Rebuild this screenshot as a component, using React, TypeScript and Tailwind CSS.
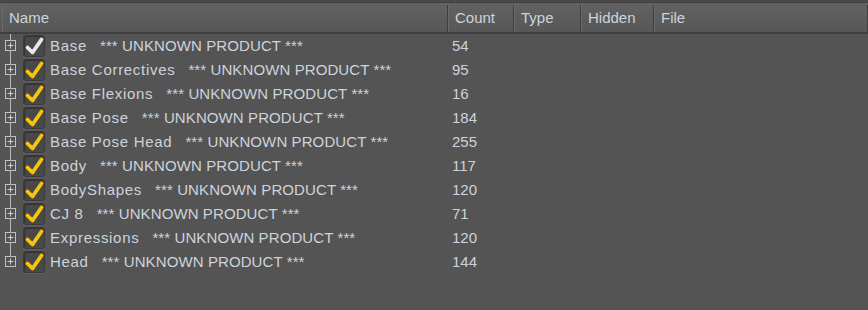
import React from 'react';

const ROWS = [
  { name: 'Base', count: '54', white: true },
  { name: 'Base Correctives', count: '95' },
  { name: 'Base Flexions', count: '16' },
  { name: 'Base Pose', count: '184' },
  { name: 'Base Pose Head', count: '255' },
  { name: 'Body', count: '117' },
  { name: 'BodyShapes', count: '120' },
  { name: 'CJ 8', count: '71' },
  { name: 'Expressions', count: '120' },
  { name: 'Head', count: '144' },
];

const COLS = [
  { label: 'Name', w: 'w-[446px]' },
  { label: 'Count', w: 'w-[66px]' },
  { label: 'Type', w: 'w-[67px]' },
  { label: 'Hidden', w: 'w-[73px]' },
  { label: 'File', w: 'flex-1' },
];

function Check({ white }: { white?: boolean }) {
  return (
    <div className="relative w-[22px] h-[22px] rounded-[3px] bg-[#484848] border border-[#3a3a3a] shadow-[inset_1px_1px_0_#333,0_1px_0_#606060]">
      <svg className="absolute left-[-1px] top-[-1px]" width="22" height="22" viewBox="0 0 22 22">
        <path
          d="M4.5 12.5 L9.5 17.5 L18.5 4.5"
          fill="none"
          stroke={white ? '#e9e9e9' : '#f7c414'}
          strokeWidth="3.8"
          strokeLinecap="round"
          strokeLinejoin="round"
        />
      </svg>
    </div>
  );
}

export default function App() {
  return (
    <div className="w-[868px] h-[310px] bg-[#545454] overflow-hidden font-['Liberation_Sans',Arial,sans-serif] text-[15px] text-[#cdd3db]">
      <div className="h-[3px] bg-[#4a4a4a] border-b border-[#3e3e3e]" />
      <div className="flex h-[31px] bg-gradient-to-b from-[#626262] to-[#575757] border-b-2 border-[#3f3f3f] pt-[2px]">
        {COLS.map((c, i) => (
          <div
            key={c.label}
            className={`${c.w} flex items-center pl-[7px] border-r border-[#3f3f3f] shadow-[inset_1px_0_0_#6a6a6a] ${i === 0 ? 'ml-[2px]' : ''}`}
          >
            {c.label}
          </div>
        ))}
      </div>
      <div className="flex flex-col">
        {ROWS.map((r, i) => (
          <div key={r.name} className="flex h-[24px] items-center">
            <div className="relative w-[23px] h-full">
              <div
                className={`absolute left-[10px] w-px bg-[#b8b8b8] top-0 ${i === ROWS.length - 1 ? 'h-[12px]' : 'h-full'}`}
              />
              <div className="absolute left-[5px] top-[6px] w-[11px] h-[11px] border border-[#c0c0c0] bg-[#545454] flex items-center justify-center">
                <svg width="9" height="9" viewBox="0 0 9 9">
                  <path d="M1.5 4.5 H7.5 M4.5 1.5 V7.5" stroke="#d0d0d0" strokeWidth="1" />
                </svg>
              </div>
            </div>
            <Check white={r.white} />
            <div className="w-[405px] pl-[5px] whitespace-nowrap">
              <span className="tracking-[0.7px]">{r.name}</span>
              <span className="ml-[13px] tracking-[0.1px]">*** UNKNOWN PRODUCT ***</span>
            </div>
            <div className="pl-[2px]">{r.count}</div>
          </div>
        ))}
      </div>
    </div>
  );
}
